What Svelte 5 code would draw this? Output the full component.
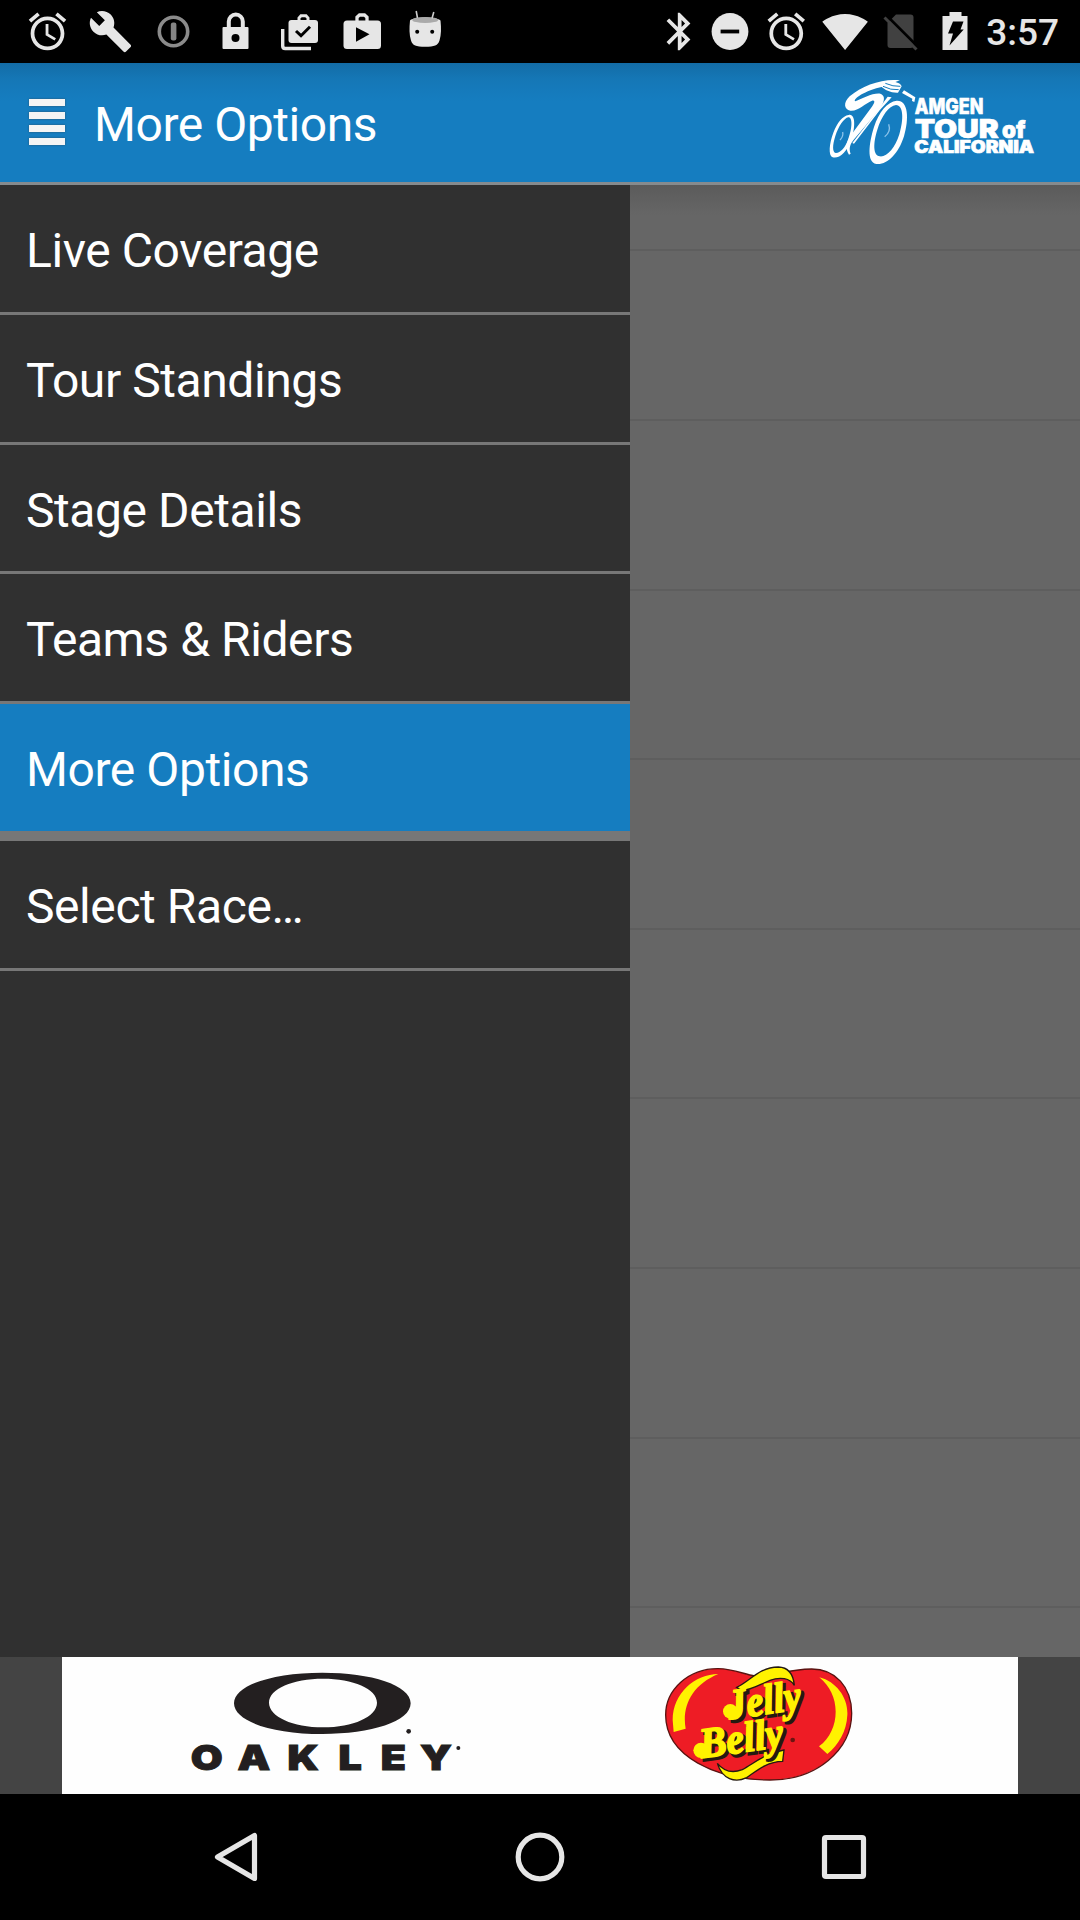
<script>
  const ALARM =
    'M22 5.72l-4.6-3.86-1.29 1.53 4.6 3.86L22 5.72zM7.88 3.39L6.6 1.86 2 5.71l1.29 1.53 4.59-3.85zM12.5 8H11v6l4.75 2.85.75-1.23-4-2.37V8zM12 4c-4.97 0-9 4.03-9 9s4.02 9 9 9c4.97 0 9-4.03 9-9s-4.03-9-9-9zm0 16c-3.87 0-7-3.13-7-7s3.13-7 7-7 7 3.13 7 7-3.13 7-7 7z';

  const menu = [
    { label: 'Live Coverage' },
    { label: 'Tour Standings' },
    { label: 'Stage Details' },
    { label: 'Teams & Riders' },
    { label: 'More Options', active: true },
    { label: 'Select Race…' }
  ];
</script>

<div class="screen">
  <div class="status">
    <div class="left">
      <svg viewBox="0 0 24 24"><path d={ALARM} /></svg>
      <svg viewBox="0 0 24 24"><path d="M22.7 19l-9.1-9.1c.9-2.3.4-5-1.5-6.9-2-2-5-2.4-7.4-1.3L9 6 6 9 1.6 4.7C.4 7.1.9 10.1 2.9 12.1c1.9 1.9 4.6 2.4 6.9 1.5l9.1 9.1c.4.4 1 .4 1.4 0l2.3-2.3c.5-.4.5-1.1.1-1.4z" /></svg>
      <svg viewBox="0 0 45 45">
        <circle cx="22.5" cy="22.5" r="14.2" fill="none" stroke="#8b8b8b" stroke-width="3.6" />
        <rect x="19.8" y="13.5" width="5.6" height="18" rx="2.2" fill="#858585" />
      </svg>
      <svg viewBox="0 0 45 45">
        <path d="M14.8 19v-6.5a7 7 0 0 1 14 0V19" fill="none" stroke="#e6e6e6" stroke-width="4" />
        <rect x="8.5" y="18" width="26" height="22" rx="1" />
        <circle cx="21.5" cy="29" r="4" fill="#000" />
      </svg>
      <svg viewBox="0 0 45 45">
        <rect x="11.5" y="11" width="29.5" height="23" rx="3" />
        <path d="M22 12V9l2-2.200h5l2 2.200v3" fill="none" stroke="#e6e6e6" stroke-width="3" />
        <path d="M5.700 20v17q0 2.500 2.500 2.500H34" fill="none" stroke="#e6e6e6" stroke-width="3.400" />
        <path d="M19 22l5 4.700 9-9" fill="none" stroke="#000" stroke-width="3" />
      </svg>
      <svg viewBox="0 0 45 45">
        <rect x="3.500" y="11.500" width="37.500" height="28.500" rx="3.500" />
        <path d="M17 12V8.200L19.500 6h5L27 8.200V12" fill="none" stroke="#e6e6e6" stroke-width="3.300" />
        <path d="M16 18.300l13.500 7L16 32.700z" fill="#000" />
      </svg>
      <svg viewBox="0.500 0 45 45">
        <path d="M7.500 11.500c3-4 27-4 30.500 0 .8 8 .8 14-1 20-1.500 5-5 6.200-14.300 6.200S10 36.500 8.500 31.500c-1.800-6-1.800-12-1-20z" />
        <ellipse cx="22.700" cy="10.900" rx="13" ry="3" fill="#aaa" />
        <path d="M13.700 2L15 9M31.300 3l-1.800 6.500" stroke="#ccc" stroke-width="1.600" />
        <circle cx="14.700" cy="22.700" r="2" fill="#000" />
        <circle cx="29.700" cy="22.700" r="2" fill="#000" />
      </svg>
    </div>
    <div class="right">
      <svg viewBox="-1.700 0 24 24"><path d="M17.710 7.710L12 2h-1v7.590L6.410 5 5 6.410 10.590 12 5 17.590 6.410 19 11 14.410V22h1l5.710-5.710-4.300-4.290 4.300-4.290zM13 5.830l1.880 1.880L13 9.590V5.830zm1.880 10.460L13 18.170v-3.760l1.880 1.880z" /></svg>
      <svg viewBox="0 0 45 45">
        <circle cx="20" cy="22.500" r="18.400" />
        <rect x="10.600" y="20.600" width="18.600" height="3.800" fill="#000" />
      </svg>
      <svg viewBox="1.200 0 24 24"><path d={ALARM} /></svg>
      <svg class="wifi" viewBox="-0.300 0 24 24"><path d="M12.010 21.490L23.640 7c-.45-.34-4.930-4-11.640-4C5.280 3 .810 6.660.360 7l11.630 14.490.010.010.010-.010z" /></svg>
      <svg viewBox="0 0 45 45">
        <path d="M18 5.500h14.500q3 0 3 3V36q0 3-3 3h-20q-3 0-3-3V14z" fill="#414141" />
        <path d="M9.500 7.500l30 30" stroke="#000" stroke-width="3" />
        <path d="M6.500 8.500l32 32" stroke="#414141" stroke-width="3" />
      </svg>
      <svg viewBox="0 0 45 45">
        <path d="M15.500 3h12v4h6v34h-25V7h7z" />
        <path d="M19 12.500h10.500l-3 8h3.200L15.500 36.500l3.500-12h-5z" fill="#000" />
      </svg>
      <span class="time">3:57</span>
    </div>
  </div>

  <header>
    <div class="burger"><i></i><i></i><i></i><i></i></div>
    <h1>More Options</h1>
    <svg class="brand" viewBox="0 9 840 357">
      <g fill="#fff">
        <path fill-rule="evenodd" d="M146 165C168 160 166 205 153 242 140 276 118 297 98 292 84 286 88 250 100 218 112 187 128 168 146 165zM145 172C132 174 115 200 106 228 97 256 97 277 107 279 120 280 136 263 145 237 157 204 158 172 145 172z" />
        <path fill-rule="evenodd" d="M290 122C325 120 328 175 312 229 295 283 260 316 229 312 199 307 207 249 222 201 237 155 262 125 290 122zM288 135C267 137 244 169 232 209 219 250 219 286 239 289 261 292 285 264 298 223 312 176 310 136 288 135z" />
        <path d="M300 61C250 54 187 76 149 109 129 128 132 149 151 152 176 154 194 130 216 122 227 119 224 130 213 144L151 228C138 247 135 264 147 284L152 281C146 266 150 252 161 239L231 157C251 134 261 108 241 101 218 98 187 116 166 124 157 117 195 91 248 80z" />
        <path d="M242 79C258 61 298 61 305 79L294 98C272 99 256 91 242 79zM312 91L346 112 343 126 336 123 337 116 306 99zM263 110L275 112 239 151 162 251 157 249 229 157z" />
        <path d="M249 79Q272 91 296 89M256 70Q279 80 301 79" fill="none" stroke="#157dc0" stroke-width="3" />
        <path d="M266 193q8 22-12 37M128 216q3 13-8 24" fill="none" stroke="#8cc3ea" stroke-width="4" />
      </g>
      <g class="brand-text">
        <text class="amgen" x="344" y="162" textLength="206" lengthAdjust="spacingAndGlyphs">AMGEN</text>
        <text class="tour" x="344" y="233" textLength="252" lengthAdjust="spacingAndGlyphs">TOUR</text>
        <text class="of" x="606" y="233" textLength="70" lengthAdjust="spacingAndGlyphs">of</text>
        <text class="cali" x="343" y="280" textLength="359" lengthAdjust="spacingAndGlyphs">CALIFORNIA</text>
      </g>
    </svg>
  </header>

  <main>
    <nav>
      {#each menu as item}
        <div class="item" class:active={item.active}>{item.label}</div>
      {/each}
    </nav>
    <div class="behind">
      <div class="row first"></div>
      {#each Array(8) as _}
        <div class="row"></div>
      {/each}
    </div>
  </main>

  <div class="ads">
    <div class="banner">
      <svg class="oakley" viewBox="0 21 990 411">
        <path fill-rule="evenodd" d="M222 160C222 105 340 68 487 68S752 105 752 160 634 252 487 252 222 215 222 160zM327 158C327 200 399 232 489 232S651 200 651 158 579 86 489 86 327 116 327 158z" />
        <circle cx="746" cy="244" r="7" />
        <circle cx="895" cy="294" r="6" />
        <text transform="scale(1.2 1)" x="77 194 319 446 552 650" y="361">OAKLEY</text>
      </svg>
      <svg class="jelly" viewBox="0 21 720 411">
        <path d="M107 195C107 120 175 55 265 56 310 57 340 72 375 78 420 80 470 58 545 57 615 57 665 110 665 190 665 300 560 390 420 390 260 390 107 320 107 195z" fill="#ee1c25" stroke="#5a1210" stroke-width="4" />
        <path d="M265 72C195 72 128 130 128 210L131 246 167 236C155 170 185 105 265 72zM568 82C620 95 655 145 652 195 650 245 625 285 592 312L567 289C600 265 617 225 617 185 617 145 600 108 568 82z" fill="#fff200" />
        <g stroke="#241a10" stroke-width="4" fill="#fff200">
          <path d="M320 112C360 95 385 52 445 51 478 52 490 75 493 106 480 84 450 80 420 91 390 103 365 120 335 122z" />
          <path d="M262 340C280 362 305 371 337 359 375 338 405 310 462 300L458 334C410 335 380 362 350 383 315 400 277 388 262 340z" />
        </g>
        <g class="script shadow">
          <text transform="translate(306 215) rotate(-8)" textLength="222" lengthAdjust="spacingAndGlyphs">Jelly</text>
          <text transform="translate(223 331) rotate(-8)" textLength="252" lengthAdjust="spacingAndGlyphs">Belly</text>
        </g>
        <g class="script">
          <text transform="translate(298 208) rotate(-8)" textLength="222" lengthAdjust="spacingAndGlyphs">Jelly</text>
          <text transform="translate(215 324) rotate(-8)" textLength="252" lengthAdjust="spacingAndGlyphs">Belly</text>
        </g>
        <circle cx="301" cy="184" r="22" fill="#fff200" />
        <circle cx="213" cy="301" r="23" fill="#fff200" />
        <circle cx="488" cy="270" r="7" fill="#6b1512" />
      </svg>
    </div>
  </div>

  <div class="navbar">
    <svg viewBox="0 0 60 60"><path d="M48.500 8.500v43L11.500 30z" /></svg>
    <svg viewBox="0 0 60 60"><circle cx="30" cy="30" r="21.800" /></svg>
    <svg viewBox="0 0 60 60"><rect x="10.500" y="10.500" width="39" height="39" rx="1.500" /></svg>
  </div>
</div>

<style>
  :global(body) { margin: 0; background: #000; }
  .screen {
    width: 1080px;
    height: 1920px;
    display: flex;
    flex-direction: column;
    overflow: hidden;
    background: #000;
    color: #fff;
    font-family: Roboto, sans-serif;
  }
  .status {
    height: 63px;
    flex: none;
    display: flex;
    justify-content: space-between;
    align-items: center;
    box-sizing: border-box;
    padding: 0 21px 0 25px;
  }
  .status svg { width: 45px; height: 45px; fill: #e6e6e6; display: block; }
  .left { display: flex; gap: 18px; }
  .right { display: flex; align-items: center; gap: 11px; }
  .right .wifi { width: 47px; height: 47px; margin: 0 -1px; }
  .time { font-size: 37px; font-weight: 500; line-height: 63px; color: #e6e6e6; margin: 0 0 0 -4px; padding-top: 2px; }

  header {
    height: 122px;
    flex: none;
    box-sizing: border-box;
    display: flex;
    align-items: center;
    background: linear-gradient(#136ca6 0, #1577b6 16px, #157dc0 38px);
    border-bottom: 3px solid #868b8e;
  }
  .burger { display: flex; flex-direction: column; gap: 6px; width: 36px; margin: 0 29px 0 29px; padding-bottom: 1px; }
  .burger i { height: 7px; background: #f4f4f4; box-shadow: 0 0 2px #31485c; }
  h1 { margin: 0; font-size: 48px; letter-spacing: -0.450px; font-weight: 400; line-height: 56px; padding-top: 4px; flex: 1; white-space: nowrap; }
  .brand { width: 280px; height: 119px; display: block; }
  .brand-text { fill: #fff; font-family: Inter, sans-serif; font-weight: 900; stroke: #fff; stroke-width: 2px; }
  .amgen { font-size: 64px; font-weight: 800; }
  .tour { font-size: 79px; }
  .of { font-size: 68px; }
  .cali { font-size: 51px; }

  main { flex: 1; display: flex; min-height: 0; }
  nav { width: 630px; background: #303030; }
  .item {
    height: 129.750px;
    box-sizing: border-box;
    border-bottom: 3px solid #777;
    padding: 4px 0 0 26px;
    font-size: 48px;
    letter-spacing: -0.420px;
    line-height: 123px;
    white-space: nowrap;
  }
  .item.active { height: 137px; background: #157dc0; border-bottom-width: 10px; }
  .behind { flex: 1; background: linear-gradient(#5b5b5b, #666 30px); overflow: hidden; }
  .row { height: 169.600px; box-sizing: border-box; border-bottom: 2px solid #5e5e5e; }
  .row.first { height: 66.400px; }

  .ads { height: 137px; flex: none; background: #444; display: flex; justify-content: center; }
  .banner { width: 956px; background: #fefefe; display: flex; }
  .oakley { width: 330px; height: 137px; margin-left: 98px; fill: #231f20; }
  .oakley text { font-family: Inter, sans-serif; font-weight: 900; font-size: 103px; stroke: #231f20; stroke-width: 3px; }
  .jelly { width: 240px; height: 137px; margin-left: 140px; }
  .script text {
    font-family: "Liberation Serif", serif;
    font-weight: 700;
    font-style: italic;
    font-size: 128px;
    fill: #fff200;
    stroke: #fff200;
    stroke-width: 5px;
  }
  .shadow text { fill: #241a10; stroke: #241a10; stroke-width: 9px; }

  .navbar { height: 126px; flex: none; box-sizing: border-box; display: flex; align-items: center; justify-content: center; gap: 244px; }
  .navbar svg { width: 60px; height: 60px; fill: none; stroke: #e6e6e6; stroke-width: 5.200px; stroke-linejoin: round; }
</style>
